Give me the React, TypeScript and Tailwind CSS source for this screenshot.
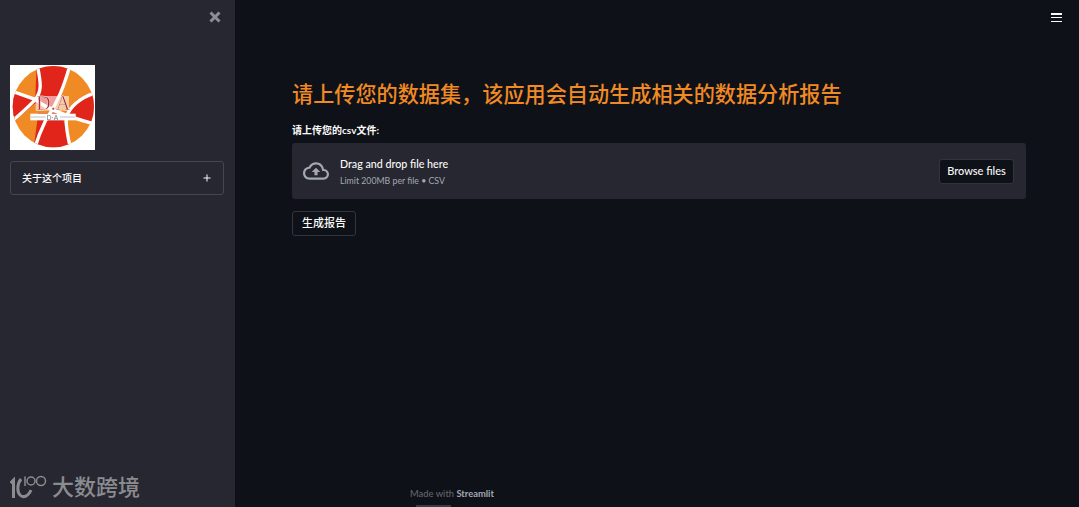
const FONT = "font-['Lato','Noto_Sans_CJK_SC',sans-serif]";

function BallLogo() {
  return (
    <svg viewBox="15 15 255 255" className="h-[85px] w-[85px] bg-white blur-[0.4px]">
      <defs>
        <clipPath id="ball">
          <circle cx="145" cy="140" r="122" />
        </clipPath>
      </defs>
      <g clipPath="url(#ball)">
        <rect x="15" y="15" width="255" height="255" fill="#f08a24" />
        <polygon points="95,15 195,15 150,140 90,130" fill="#e1251b" />
        <polygon points="100,160 170,160 200,270 85,270" fill="#e1251b" />
        <polygon points="10,90 95,118 90,130 10,200" fill="#e1251b" />
        <polygon points="275,95 215,120 190,165 275,190" fill="#e1251b" />
        <g fill="none" stroke="#ffffff" strokeWidth="10">
          <path d="M195 15 C178 75 160 125 120 185 C108 210 98 235 90 262" />
          <path d="M15 92 L90 118 C130 150 190 170 262 190" />
          <path d="M97 15 C108 70 112 95 88 122 C65 145 45 165 15 188" />
          <path d="M272 98 C235 110 200 130 184 170 C182 200 188 230 196 262" />
        </g>
      </g>
      <rect x="92" y="108" width="100" height="44" fill="#ffffff" fillOpacity="0.55" />
      <text x="94" y="150" fontFamily="'Liberation Serif', serif" fontSize="60" fill="#a8343a" stroke="#ffffff" strokeWidth="1">D.A</text>
      <rect x="76" y="161" width="136" height="20" fill="#ffffff" />
      <line x1="78" y1="171" x2="122" y2="171" stroke="#9aa0a6" strokeWidth="2" />
      <line x1="165" y1="171" x2="210" y2="171" stroke="#9aa0a6" strokeWidth="2" />
      <text x="125" y="180" fontFamily="'Liberation Sans', sans-serif" fontSize="20" fill="#6b7280">D·A</text>
    </svg>
  );
}

function WatermarkLogo() {
  return (
    <svg width="38" height="24" viewBox="0 0 38 24" fill="none" stroke="#8b8c90" className="shrink-0">
      <path d="M0.5 8 L3.5 5 V23" strokeWidth="3" />
      <path d="M11 4 C7 9 7 17 10 20 C13 23 18 22 21 15" strokeWidth="3" />
      <path d="M15 1.5 V11" strokeWidth="1.5" />
      <circle cx="21" cy="6" r="4" strokeWidth="1.5" />
      <circle cx="31" cy="6" r="4.5" strokeWidth="1.5" />
    </svg>
  );
}

export default function App() {
  return (
    <div className={`flex h-[507px] w-[1079px] overflow-hidden bg-[#0e1117] ${FONT}`}>
      {/* sidebar */}
      <aside className="flex h-full w-[235px] shrink-0 flex-col bg-[#262730]">
        <div className="flex h-[65px] shrink-0 justify-end pt-[11px] pr-[14px]">
          <svg width="12" height="12" viewBox="0 0 12 12" stroke="#8d8e93" strokeWidth="3">
            <path d="M1.5 1.5 L10.5 10.5 M10.5 1.5 L1.5 10.5" />
          </svg>
        </div>
        <div className="px-[10px]">
          <BallLogo />
          <div className="mt-[11px] flex h-[34px] w-[214px] items-center justify-between rounded-[3px] border border-[#45464e] pr-[12px] pl-[11px] text-[10px] font-medium text-[#fafafa]">
            <span>关于这个项目</span>
            <svg width="8" height="8" viewBox="0 0 8 8" stroke="#fafafa" strokeWidth="1">
              <path d="M4 0.5 V7.5 M0.5 4 H7.5" />
            </svg>
          </div>
        </div>
        <div className="mt-auto flex items-center gap-[4px] pb-[8px] pl-[10px]">
          <WatermarkLogo />
          <span className="text-[22px] leading-[24px] font-medium text-[#8b8c90]">大数跨境</span>
        </div>
      </aside>

      {/* main */}
      <main className="flex h-full flex-1 flex-col pr-[53px] pl-[57px]">
        <div className="flex h-[13px] shrink-0 justify-end">
          <div className="mt-[13px] mr-[-36px] flex h-[9px] w-[11px] shrink-0 flex-col justify-between">
            <span className="h-[1.5px] bg-[#fafafa]" />
            <span className="h-[1.5px] bg-[#fafafa]" />
            <span className="h-[1.5px] bg-[#fafafa]" />
          </div>
        </div>
        <h1 className="mt-[66px] text-[21.15px] leading-[30px] font-medium whitespace-nowrap text-[#f08a24]">
          请上传您的数据集，该应用会自动生成相关的数据分析报告
        </h1>
        <label className="mt-[13px] text-[10px] leading-[16px] font-bold text-[#fafafa]">请上传您的csv文件:</label>
        <div className="mt-[5px] flex h-[56px] items-center rounded-[3px] bg-[#262730] pr-[12px] pl-[11px]">
          <svg width="26" height="26" viewBox="0 0 24 24" fill="#a3a8b4" className="shrink-0">
            <path d="M19.35 10.04C18.67 6.59 15.64 4 12 4 9.11 4 6.6 5.64 5.35 8.04 2.34 8.36 0 10.91 0 14c0 3.31 2.69 6 6 6h13c2.76 0 5-2.24 5-5 0-2.64-2.05-4.78-4.65-4.96zM19 18H6c-2.21 0-4-1.79-4-4 0-2.05 1.53-3.76 3.56-3.97l1.07-.11.5-.95C8.08 7.14 9.94 6 12 6c2.62 0 4.88 1.86 5.39 4.43l.3 1.5 1.53.11c1.56.1 2.78 1.41 2.78 2.96 0 1.65-1.35 3-3 3zM8 13h2.55v3h2.9v-3H16l-4-4z" />
          </svg>
          <div className="ml-[11px] flex flex-col pt-[2px]">
            <span className="text-[10.7px] leading-[16px] font-medium text-[#fafafa]">Drag and drop file here</span>
            <span className="mt-[2px] text-[8.75px] leading-[14px] text-[#a3a8b4]">Limit 200MB per file • CSV</span>
          </div>
          <button className="ml-auto h-[25px] w-[75px] rounded-[3px] border border-[#33353c] bg-[#0e1117] text-[11px] font-medium text-[#fafafa]">
            Browse files
          </button>
        </div>
        <button className="mt-[12px] h-[25px] w-[64px] rounded-[3px] border border-[#33353c] text-[11px] font-medium text-[#fafafa]">
          生成报告
        </button>
        <div className="mt-auto flex flex-col pl-[118px]">
          <span className="text-[9.4px] leading-[12px] font-medium text-[#62656c]">
            Made with <span className="font-bold text-[#a3a8b4]">Streamlit</span>
          </span>
          <span className="mt-[5px] ml-[6px] h-[2px] w-[35px] bg-[#3a3c44]" />
        </div>
      </main>
    </div>
  );
}
